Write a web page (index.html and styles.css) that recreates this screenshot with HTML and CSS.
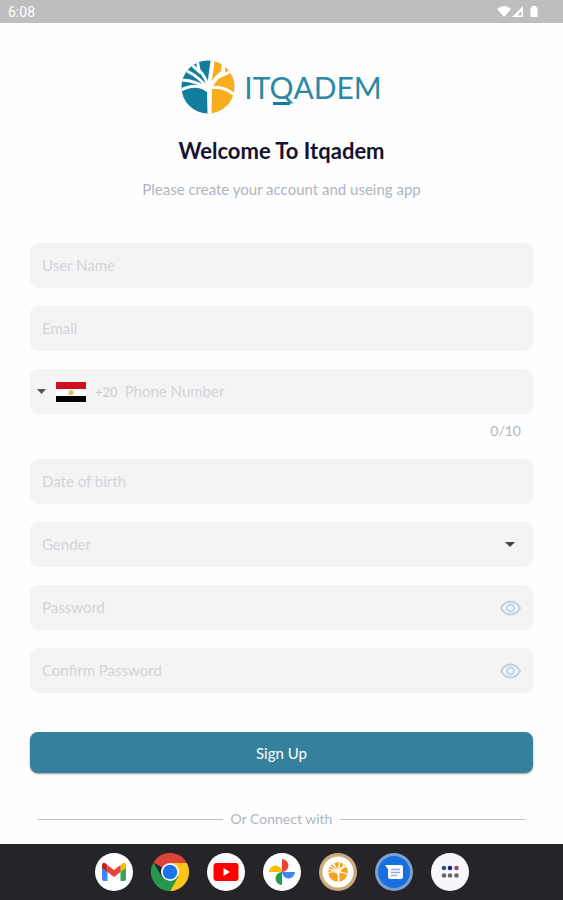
FILE: index.html
```
<!DOCTYPE html>
<html lang="en">

<head>
  <meta charset="UTF-8">
  <meta name="viewport" content="width=device-width, initial-scale=1.0">
  <title>Itqadem - Sign Up</title>
  <link rel="stylesheet" href="styles.css">
</head>

<body>
  <div class="status-bar">
    <span>6:08</span>
    <svg width="42" height="14" viewBox="0 0 42 14" fill="#fff" aria-hidden="true">
      <path d="M0 4Q7-2 14 4L7 12Z" />
      <path d="M26 1V12H15ZM24.500 6L21 9.500V10.500H24.500Z" fill-rule="evenodd" />
      <path d="M35 1h4v1.500h1.500V12h-7V2.500H35Z" />
    </svg>
  </div>

  <main>
    <header>
      <div class="logo">
        <svg width="54" height="54" viewBox="0 0 54 54" aria-hidden="true">
          <defs>
            <clipPath id="disc"><circle cx="27" cy="27" r="26.500" /></clipPath>
            <g id="branches" fill="none" stroke="#fff">
              <path d="M26.500 54L26 30L29 24L31 30L30.500 54Z" fill="#fff" stroke="none" />
              <path d="M28 30Q29 18 32-2" stroke-width="4" />
              <path d="M28 30Q26 18 18 10L16-1" stroke-width="3" />
              <path d="M20 13Q15 9 10 4" stroke-width="3" />
              <path d="M28 30Q20 18 6 11" stroke-width="3" />
              <path d="M28 30Q16 20-2 20" stroke-width="3" />
              <path d="M28 32Q16 21-2 31" stroke-width="3" />
              <path d="M28 30Q32 20 42 12L43-1" stroke-width="4" />
              <path d="M37 17Q43 15 54 9" stroke-width="3" />
              <path d="M28 28Q42 25 55 36" stroke-width="3" />
            </g>
          </defs>
          <g clip-path="url(#disc)">
            <path d="M0 0H32L28 24V54H0Z" fill="#117f9c" />
            <path d="M32 0H54V54H28V24Z" fill="#f7ad1c" />
            <use href="#branches" />
          </g>
        </svg>
        <span class="logo-name">IT<span class="logo-q">Q</span>ADEM</span>
      </div>
      <h1>Welcome To Itqadem</h1>
      <p>Please create your account and useing app</p>
    </header>

    <form action="#">
      <div class="field">
        <div class="entry">
          <input type="text" id="username" placeholder=" ">
          <label for="username">User Name</label>
        </div>
      </div>
      <div class="field">
        <div class="entry">
          <input type="email" id="email" placeholder=" ">
          <label for="email">Email</label>
        </div>
      </div>
      <div>
        <div class="field phone">
          <button type="button" class="country" aria-label="Country code +20">
            <svg width="9" height="5" viewBox="0 0 9 5"><path d="M0 0H9L4.500 5Z" fill="#555" /></svg>
            <svg class="flag" width="30" height="20" viewBox="0 0 30 20">
              <path d="M0 0H30V20H0Z" fill="#fff" />
              <path d="M0 0H30V7H0Z" fill="#ce1020" />
              <path d="M0 14H30V20H0Z" fill="#000" />
              <path d="M12.500 8.500L14 9V8h2v1l1.500-.5V12L16 13H14L12.500 12Z" fill="#d3c56b" />
            </svg>
            <span>+20</span>
          </button>
          <div class="entry">
            <input type="tel" id="phone" maxlength="10" placeholder=" ">
            <label for="phone">Phone Number</label>
          </div>
        </div>
        <div class="counter">0/10</div>
      </div>
      <div class="field">
        <div class="entry">
          <input type="text" id="birth" placeholder=" ">
          <label for="birth">Date of birth</label>
        </div>
      </div>
      <div class="field">
        <div class="entry">
          <select id="gender" required>
            <option value=""></option>
            <option>Male</option>
            <option>Female</option>
          </select>
          <label for="gender">Gender</label>
        </div>
        <svg class="arrow" width="10" height="5" viewBox="0 0 10 5"><path d="M0 0H10L5 5Z" fill="#444" /></svg>
      </div>
      <div class="field">
        <div class="entry">
          <input type="password" id="password" placeholder=" ">
          <label for="password">Password</label>
        </div>
        <button type="button" class="eye" aria-label="Show password">
          <svg width="21" height="16" viewBox="0 0 21 16" fill="none" stroke="#c3cede" stroke-width="1.800">
            <path d="M1 8Q4.500 1.500 10.500 1.500T20 8Q16.500 14.500 10.500 14.500T1 8Z" />
            <circle cx="10.500" cy="8" r="3.500" />
          </svg>
        </button>
      </div>
      <div class="field">
        <div class="entry">
          <input type="password" id="confirm" placeholder=" ">
          <label for="confirm">Confirm Password</label>
        </div>
        <button type="button" class="eye" aria-label="Show password">
          <svg width="21" height="16" viewBox="0 0 21 16" fill="none" stroke="#c3cede" stroke-width="1.800">
            <path d="M1 8Q4.500 1.500 10.500 1.500T20 8Q16.500 14.500 10.500 14.500T1 8Z" />
            <circle cx="10.500" cy="8" r="3.500" />
          </svg>
        </button>
      </div>
      <button type="submit" class="signup">Sign Up</button>
    </form>

    <div class="divider">Or Connect with</div>
  </main>

  <nav class="dock">
    <a href="#" aria-label="Gmail">
      <svg viewBox="0 0 38 38">
        <circle cx="19" cy="19" r="19" fill="#fff" />
        <path d="M7 12V26Q7 28 9 28H12.500V16Z" fill="#4285f4" />
        <path d="M31 12V26Q31 28 29 28H25.500V16Z" fill="#34a853" />
        <path d="M25.500 12L28 10Q31 9 31 13V15L25.500 19Z" fill="#fbbc04" />
        <path d="M12.500 12L10 10Q7 9 7 13V15L12.500 19Z" fill="#c5221f" />
        <path d="M12.500 12L19 17L25.500 12V19L19 24L12.500 19Z" fill="#ea4335" />
      </svg>
    </a>
    <a href="#" aria-label="Chrome">
      <svg viewBox="0 0 38 38">
        <path d="M19 19L2.500 9.500A19 19 0 0 1 35.500 9.500Z" fill="#db4437" />
        <path d="M19 10H35.800A19 19 0 0 1 19 38L27 23.500Z" fill="#ffc61a" />
        <path d="M2.500 9.500L11 24Q15 29 21 28L19 38A19 19 0 0 1 2.500 9.500Z" fill="#24994c" />
        <path d="M27 23.500L19 38L15 30Z" fill="#24994c" />
        <circle cx="19" cy="19" r="9" fill="#fff" />
        <circle cx="19" cy="19" r="7.300" fill="#1a73e8" />
      </svg>
    </a>
    <a href="#" aria-label="YouTube">
      <svg viewBox="0 0 38 38">
        <circle cx="19" cy="19" r="19" fill="#fff" />
        <rect x="6.500" y="10" width="25" height="18" rx="3" fill="#f00" />
        <path d="M16.500 15L23 19L16.500 23Z" fill="#fff" />
      </svg>
    </a>
    <a href="#" aria-label="Photos">
      <svg viewBox="0 0 38 38">
        <circle cx="19" cy="19" r="19" fill="#fff" />
        <path d="M19 19V6A6.500 6.500 0 0 1 19 19Z" fill="#ea4335" />
        <path d="M19 19H32A6.500 6.500 0 0 1 19 19Z" fill="#4285f4" />
        <path d="M19 19V32A6.500 6.500 0 0 1 19 19Z" fill="#1e9e4a" />
        <path d="M19 19H6A6.500 6.500 0 0 1 19 19Z" fill="#fbbc04" />
      </svg>
    </a>
    <a href="#" aria-label="Itqadem">
      <svg viewBox="0 0 38 38">
        <circle cx="19" cy="19" r="19" fill="#c7ad7b" />
        <circle cx="19" cy="19" r="15.500" fill="#fff" />
        <svg x="9" y="9" width="20" height="20" viewBox="0 0 54 54">
          <g clip-path="url(#disc)">
            <path d="M0 0H54V54H0Z" fill="#f5a31c" />
            <use href="#branches" />
          </g>
        </svg>
      </svg>
    </a>
    <a href="#" aria-label="Messages">
      <svg viewBox="0 0 38 38">
        <circle cx="19" cy="19" r="19" fill="#7d9fcb" />
        <circle cx="19" cy="19" r="16" fill="#1a6fe0" />
        <path d="M10 12H26Q28 12 28 14V24Q28 26 26 26H15Q13 26 13 24V16Z" fill="#fff" />
        <path d="M16 16.500H25M16 19.500H25M16 22.500H22" stroke="#82b1f5" stroke-width="1.300" />
      </svg>
    </a>
    <a href="#" aria-label="All apps">
      <svg viewBox="0 0 38 38">
        <circle cx="19" cy="19" r="19" fill="#f8f8fc" />
        <circle cx="13" cy="15" r="2.300" fill="#3d4c82" />
        <circle cx="19" cy="15" r="2.300" fill="#20208c" />
        <circle cx="25.500" cy="15" r="2.300" fill="#8a4a68" />
        <circle cx="13" cy="22.500" r="2.300" fill="#666672" />
        <circle cx="19" cy="22.500" r="2.300" fill="#666672" />
        <circle cx="25.500" cy="22.500" r="2.300" fill="#666672" />
      </svg>
    </a>
  </nav>
</body>

</html>
```
FILE: styles.css
```
* {
  box-sizing: border-box;
}

body {
  margin: 0;
  min-height: 100vh;
  display: flex;
  flex-direction: column;
  background-color: #fefefe;
  color: #b0b5bf;
  font-family: Lato, sans-serif;
  font-size: 15px;
  line-height: 20px;
}

svg {
  display: block;
}

button,
input,
select {
  font: inherit;
}

.status-bar {
  display: flex;
  align-items: center;
  justify-content: space-between;
  height: 23px;
  padding: 0 24px 0 8px;
  background-color: #bebebe;
  color: #fff;
  font-family: Roboto, sans-serif;
  font-size: 14px;
}

main {
  flex-grow: 1;
  padding: 37px 30px 0;
}

header {
  text-align: center;
}

.logo {
  display: flex;
  align-items: center;
  justify-content: center;
  gap: 9px;
}

.logo-name {
  color: #2a89a4;
  font-size: 30px;
  line-height: 54px;
}

.logo-q {
  position: relative;
}

.logo-q::after {
  content: "";
  position: absolute;
  left: 4px;
  right: 3px;
  bottom: 0;
  height: 3px;
  background-color: #117f9c;
}

h1 {
  margin: 24px 0 0;
  color: #15132f;
  font-size: 22px;
  line-height: 26px;
}

header p {
  margin: 15px 0 0;
}

form {
  display: flex;
  flex-direction: column;
  gap: 18px;
  margin-top: 44px;
}

.field {
  position: relative;
  display: flex;
  align-items: center;
  height: 45px;
  padding: 0 12px;
  border-radius: 8px;
  background-color: #f4f4f4;
}

.entry {
  position: relative;
  flex-grow: 1;
  height: 100%;
}

/* the label lies over the empty box, like a placeholder */
.entry label {
  position: absolute;
  top: 0;
  left: 0;
  line-height: 45px;
  color: #d1d4da;
  pointer-events: none;
}

.entry input:not(:placeholder-shown) + label,
.entry select:valid + label {
  display: none;
}

.entry input,
.entry select {
  width: 100%;
  height: 100%;
  padding: 0;
  border: 0;
  outline: 0;
  background: none;
  color: #15132f;
  appearance: none;
}

.phone {
  padding-left: 7px;
}

.country {
  display: flex;
  align-items: center;
  margin-right: 7px;
  padding: 0;
  border: 0;
  background: none;
  color: #c9cdd4;
  font-size: 13px;
}

.flag {
  margin: 0 9px 0 10px;
}

.counter {
  height: 27px;
  padding: 7px 12px 0;
  font-size: 14px;
  text-align: right;
}

.arrow {
  position: absolute;
  right: 18px;
  pointer-events: none;
}

.eye {
  padding: 0;
  border: 0;
  background: none;
}

.signup {
  height: 41px;
  margin-top: 21px;
  border: 0;
  border-radius: 8px;
  background-color: #35809c;
  box-shadow: 0 1px 2px #00000066;
  color: #fff;
}

.divider {
  display: flex;
  align-items: center;
  gap: 8px;
  margin: 36px 8px 15px;
  font-size: 14px;
}

.divider::before,
.divider::after {
  content: "";
  flex-grow: 1;
  height: 1px;
  background-color: #bfc3ca;
}

.dock {
  display: flex;
  align-items: center;
  justify-content: center;
  gap: 18px;
  height: 56px;
  background-color: #252529;
}

.dock a > svg {
  width: 38px;
  height: 38px;
}
```
